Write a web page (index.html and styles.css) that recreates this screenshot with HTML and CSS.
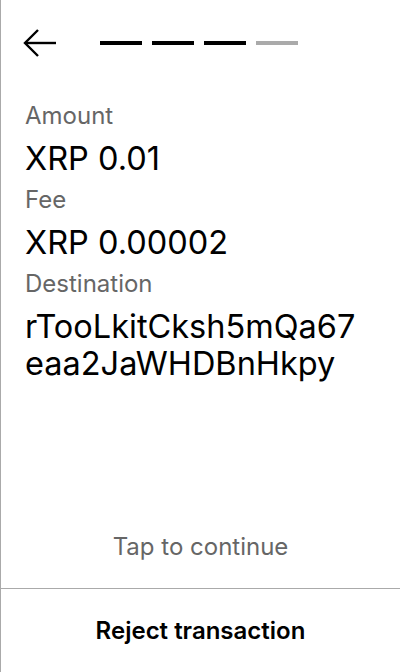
FILE: index.html
```html
<!DOCTYPE html>
<html>
<head>
<meta charset="utf-8">
<link rel="stylesheet" href="styles.css">
</head>
<body>
<div class="screen">
  <header class="top">
    <svg class="back" width="36" height="30" viewBox="0 0 36 30" fill="none" stroke="#000" stroke-width="2.4">
      <path d="M34 15H3"/>
      <path d="M16 2L3 15L16 28"/>
    </svg>
    <div class="steps">
      <span class="step on"></span>
      <span class="step on"></span>
      <span class="step on"></span>
      <span class="step"></span>
    </div>
  </header>
  <main class="details">
    <div class="label">Amount</div>
    <div class="value">XRP 0.01</div>
    <div class="label">Fee</div>
    <div class="value">XRP 0.00002</div>
    <div class="label">Destination</div>
    <div class="value addr">rTooLkitCksh5mQa67<br>eaa2JaWHDBnHkpy</div>
  </main>
  <div class="tap">Tap to continue</div>
  <div class="reject">Reject transaction</div>
</div>
</body>
</html>
```
FILE: styles.css
```css
html, body {
  margin: 0;
  padding: 0;
  background: #fff;
}
body {
  font-family: Inter, "Noto Sans", sans-serif;
  font-optical-sizing: none;
  font-variation-settings: "opsz" 14;
  color: #000;
}
.screen {
  height: 672px;
  border-left: 1px solid #aaa;
  display: flex;
  flex-direction: column;
  box-sizing: border-box;
}
.top {
  display: flex;
  align-items: center;
  height: 86px;
  padding-left: 21px;
}
.back {
  display: block;
}
.steps {
  display: flex;
  gap: 10px;
  margin-left: 42px;
}
.step {
  width: 42px;
  height: 4px;
  background: #aaa;
}
.step.on {
  background: #000;
}
.details {
  padding: 7px 24px 0 24px;
  flex: 1;
}
.label {
  font-size: 24px;
  line-height: 28px;
  margin-top: 9px;
  margin-bottom: 10px;
  color: #666;
}
.value {
  font-size: 32.5px;
  line-height: 37px;
}
.tap {
  text-align: center;
  font-size: 24px;
  color: #666;
  line-height: 28px;
  padding-bottom: 27px;
}
.reject {
  border-top: 1px solid #aaa;
  height: 83px;
  display: flex;
  align-items: center;
  justify-content: center;
  font-size: 24px;
  font-weight: 600;
}
```
